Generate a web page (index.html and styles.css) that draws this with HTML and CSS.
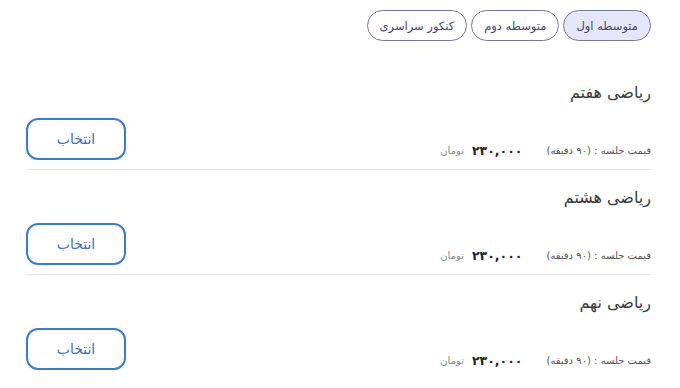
FILE: index.html
```html
<!DOCTYPE html>
<html lang="fa" dir="rtl">
  <head>
    <meta charset="UTF-8" />
    <meta name="viewport" content="width=device-width, initial-scale=1.0" />
    <title>کلاس‌ها</title>
    <link rel="stylesheet" href="styles.css">
  </head>
  <body>
    <div class="container">
      <nav class="tabs">
        <button class="tab active">متوسطه اول</button>
        <button class="tab">متوسطه دوم</button>
        <button class="tab">کنکور سراسری</button>
      </nav>

      <div class="course">
        <h3 class="course-title">ریاضی هفتم</h3>
        <div class="course-bottom">
          <div class="price">
            <span class="price-label">قیمت جلسه : (۹۰ دقیقه)</span>
            <span class="price-amount">۲۳۰,۰۰۰</span>
            <span class="price-unit">تومان</span>
          </div>
          <button class="select-btn">انتخاب</button>
        </div>
      </div>

      <div class="course">
        <h3 class="course-title">ریاضی هشتم</h3>
        <div class="course-bottom">
          <div class="price">
            <span class="price-label">قیمت جلسه : (۹۰ دقیقه)</span>
            <span class="price-amount">۲۳۰,۰۰۰</span>
            <span class="price-unit">تومان</span>
          </div>
          <button class="select-btn">انتخاب</button>
        </div>
      </div>

      <div class="course">
        <h3 class="course-title">ریاضی نهم</h3>
        <div class="course-bottom">
          <div class="price">
            <span class="price-label">قیمت جلسه : (۹۰ دقیقه)</span>
            <span class="price-amount">۲۳۰,۰۰۰</span>
            <span class="price-unit">تومان</span>
          </div>
          <button class="select-btn">انتخاب</button>
        </div>
      </div>
    </div>
  </body>
</html>
```

FILE: styles.css
```css
* {
  margin: 0;
  padding: 0;
  box-sizing: border-box;
}

body {
  background: #fff;
  font-family: "DejaVu Sans", "Noto Sans", sans-serif;
  color: #333;
}

.container {
  padding: 10px 29px 0 26px;
}

.tabs {
  display: flex;
  gap: 4px;
  margin-bottom: 24px;
}

.tab {
  height: 31px;
  padding: 0 12px;
  border: 1px solid #77779c;
  border-radius: 16px;
  background: #fff;
  color: #44446c;
  font-family: inherit;
  font-size: 11.5px;
  font-weight: normal;
  cursor: pointer;
}

.tab.active {
  background: #e5e5fb;
}

.course {
  padding: 18px 0 9px;
  border-bottom: 1px solid #e4e4e4;
}

.course:last-child {
  border-bottom: none;
}

.course-title {
  font-size: 16px;
  font-weight: normal;
  line-height: 20px;
  color: #3a3a3a;
  margin-bottom: 15px;
}

.course-bottom {
  display: flex;
  justify-content: space-between;
  align-items: flex-end;
}

.price {
  display: flex;
  align-items: center;
  line-height: 16px;
  margin-bottom: 1px;
}

.price-label {
  font-size: 10px;
  color: #555;
}

.price-amount {
  font-size: 12.5px;
  font-weight: bold;
  color: #222;
  margin-right: 24px;
}

.price-unit {
  font-size: 10px;
  color: #888;
  margin-right: 8px;
}

.select-btn {
  width: 100px;
  height: 42px;
  border: 2px solid #3b7bd4;
  border-radius: 12px;
  background: #fff;
  color: #3f6fb5;
  font-family: inherit;
  font-size: 14px;
  cursor: pointer;
}
```
